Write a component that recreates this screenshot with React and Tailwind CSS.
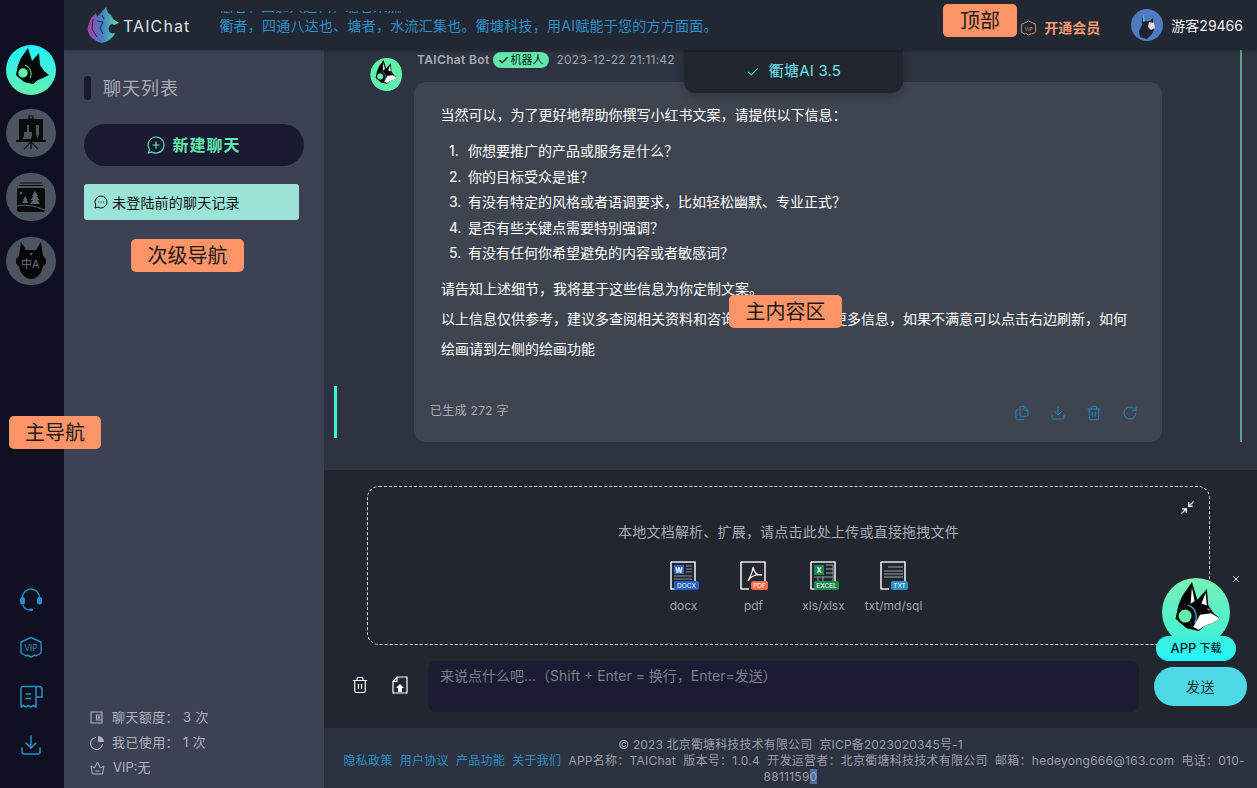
import { Check, Download, Files, Minimize2, RotateCw, Trash2, X } from 'lucide-react'

const FONT = "font-['Inter','Noto_Sans_CJK_SC',sans-serif]"

const LIST_ITEMS = [
  '你想要推广的产品或服务是什么？',
  '你的目标受众是谁？',
  '有没有特定的风格或者语调要求，比如轻松幽默、专业正式？',
  '是否有些关键点需要特别强调？',
  '有没有任何你希望避免的内容或者敏感词？',
]

// fox head in profile, shared by the rail, the chat avatar and the download badge
function FoxHead({ white = false, ring = '#63f0ad' }) {
  return (
    <g>
      <path d="M15 13 L22 3 L26 16 L33 8 L34 20 L38 26 L43 30 L37 33 L32 35 L27 39 L18 37 L10 30 L12 20 Z" fill="#050505" />
      {white && <path d="M23 36 L28 27 L36 26 L43 30 L37 33 L32 35 L27 38 Z" fill="#fff" />}
      {white && <path d="M22 7 L24 17 L21 19 Z M32 11 L33 20 L29 19 Z" fill="#fff" />}
      {white && <path d="M33 22l3 1-2 1z" fill="#d9653f" />}
      <circle cx="17" cy="28" r="5.500" fill={ring} stroke="#050505" strokeWidth="1.500" />
      <path d="M19 20 A9 9 0 0 1 24 33" fill="none" stroke={white ? '#3fa9d8' : ring} strokeWidth="1" />
    </g>
  )
}

function FoxCircle({ id, from, to, size, white }) {
  return (
    <svg width={size} height={size} viewBox="0 0 50 50">
      <defs>
        <linearGradient id={id} x1="0" y1="0" x2="0" y2="1">
          <stop offset="0" stopColor={from} />
          <stop offset="1" stopColor={to} />
        </linearGradient>
      </defs>
      <circle cx="25" cy="25" r="25" fill={`url(#${id})`} />
      <FoxHead white={white} />
    </svg>
  )
}

function EaselIcon() {
  return (
    <svg width="30" height="36" viewBox="0 0 30 36">
      <rect x="3" y="4" width="24" height="22" fill="#0b0b0b" />
      <rect x="0" y="25" width="30" height="2" fill="#0b0b0b" />
      <path d="M13 1h4v3h-4zM15 27v7M15 27l-7 7M15 27l7 7" stroke="#0b0b0b" strokeWidth="1.200" fill="none" />
      <path d="M8 17h8v3l-1 4H7l1-4zM11 10h2v7h-2z" fill="#4a5560" />
      <path d="M20 10h3v10l-1.500 3-1.500-3z" fill="#4a5560" />
    </svg>
  )
}

function PictureIcon() {
  return (
    <svg width="30" height="30" viewBox="0 0 30 30">
      <path d="M4 1h22M3 3.500h24" stroke="#0b0b0b" strokeWidth="1" />
      <rect x="1" y="6" width="28" height="24" rx="2" fill="#0b0b0b" />
      <circle cx="5" cy="11" r="1.200" fill="#5a6570" />
      <path d="M19 9l3 5h-1.500l3 4H21l3 4H14l3-4h-2.500l3-4H16z" fill="#5a6570" />
      <path d="M9 14l2.500 4h-1l2 3H6l2-3H7z" fill="#5a6570" />
      <path d="M1 24c9-2 18 0 28 4" stroke="#5a6570" strokeWidth="1" fill="none" />
    </svg>
  )
}

function TranslateFox() {
  return (
    <div className="relative w-[30px] h-[38px]">
      <svg width="30" height="38" viewBox="0 0 30 38">
        <path d="M5 0l5 8h10l5-8 2 14c2 2 3 2 3 5s-1 4-3 5c-1 7-6 13-12 13S4 31 3 24c-2-1-3-2-3-5s1-3 3-5z" fill="#050505" />
        <path d="M13 11h4l-2 3z" fill="#4a5560" />
      </svg>
      <span className="absolute left-[5px] top-[15px] text-[11px] leading-[14px] text-[#66707a]">中A</span>
    </div>
  )
}

function VipHex({ size = 24, color = '#2a8fc7', text = 8.500 }) {
  return (
    <svg width={size} height={size} viewBox="0 0 24 24">
      <path d="M12 1.500l10 4.500v11l-5 3-1-1-4 2-4-2-1 1-5-3V6z" fill="none" stroke={color} strokeWidth="1.400" strokeLinejoin="round" />
      <text x="12" y="15" textAnchor="middle" fontSize={text} fill={color} fontFamily="Inter, sans-serif">VIP</text>
    </svg>
  )
}

function FileIcon({ badge, badgeColor, children }) {
  const short = badge === 'TXT' || badge === 'PDF'
  return (
    <svg width="30" height="34" viewBox="0 0 30 34">
      <path d="M2 2h24v25M2 2v27h8" fill="none" stroke="#e8e9ec" strokeWidth="1.600" strokeLinejoin="round" />
      {children}
      <rect x={short ? 12 : 5} y="21" width={short ? 17 : 25} height="9" rx="2" fill={badgeColor} />
      <text x={short ? 20.500 : 17.500} y="28" textAnchor="middle" fontSize="6.500" fill="#fff" fontFamily="Inter, sans-serif">{badge}</text>
    </svg>
  )
}

const FILES = [
  {
    name: 'docx', badge: 'DOCX', color: '#2461c4',
    art: (
      <g>
        <rect x="5" y="5" width="10" height="9" fill="#2a66c9" />
        <text x="10" y="12.500" textAnchor="middle" fontSize="7" fontWeight="700" fill="#fff" fontFamily="Inter, sans-serif">W</text>
        <path d="M17 6h6M17 9h6M17 12h6M5 16h18M5 19h18" stroke="#8a8f98" strokeWidth="1" />
      </g>
    ),
  },
  {
    name: 'pdf', badge: 'PDF', color: '#f4694a',
    art: <path d="M14 7c1 5 3 9 9 8-5-1-12 1-14 6 2-4 5-9 5-14z" fill="none" stroke="#e8e9ec" strokeWidth="1.300" />,
  },
  {
    name: 'xls/xlsx', badge: 'EXCEL', color: '#1d8a4d',
    art: (
      <g>
        <rect x="5" y="5" width="10" height="10" fill="#1d8a4d" />
        <text x="10" y="13" textAnchor="middle" fontSize="7" fontWeight="700" fill="#fff" fontFamily="Inter, sans-serif">X</text>
        <path d="M17 5h7v16M17 9h7M17 13h7M17 17h7M5 17h12M9 17v4M14 17v4" stroke="#9aa0a8" strokeWidth="1" fill="none" />
      </g>
    ),
  },
  {
    name: 'txt/md/sql', badge: 'TXT', color: '#2a8fc7',
    art: <path d="M9 7h15M5 11h19M5 14h19M5 17h19" stroke="#9aa0a8" strokeWidth="1" />,
  },
]

function Rail() {
  return (
    <aside className="w-[64px] shrink-0 flex flex-col items-center bg-[#0f1122] pt-[45px] pb-[31px] pr-[2px]">
      <FoxCircle id="railFox" from="#1ef4ff" to="#63f0ad" size={50} />
      <div className="mt-[14px] w-[50px] h-[48px] rounded-full bg-[#4b545f] flex items-center justify-center"><EaselIcon /></div>
      <div className="mt-[16px] w-[50px] h-[48px] rounded-full bg-[#4b545f] flex items-center justify-center"><PictureIcon /></div>
      <div className="mt-[16px] w-[50px] h-[48px] rounded-full bg-[#4b545f] flex items-center justify-center"><TranslateFox /></div>

      <div className="mt-auto flex flex-col items-center gap-[24.500px] text-[#2a8fc7]">
        <svg width="24" height="24" viewBox="0 0 24 24" fill="none">
          <path d="M3.500 11V9.500a8.500 8.500 0 0 1 17 0V11" stroke="currentColor" strokeWidth="1.500" />
          <rect x="1" y="9" width="5" height="7.500" rx="2.500" fill="currentColor" />
          <rect x="18" y="9" width="5" height="7.500" rx="2.500" fill="currentColor" />
          <path d="M4 17c1 3 4 5 7 5" stroke="currentColor" strokeWidth="1.300" />
          <rect x="10" y="20.500" width="4" height="2.500" rx="1.200" fill="currentColor" />
        </svg>
        <VipHex />
        <svg width="24" height="24" viewBox="0 0 24 24" fill="none" stroke="currentColor" strokeWidth="1.500">
          <path d="M17 1.500H4a2 2 0 0 0-2 2V22l2.500-1.500L7 22l2.500-1.500L12 22l2.500-1.500L17 22V1.500z" strokeLinejoin="round" />
          <path d="M17 1.500h3a3 3 0 0 1 3 3V12h-6M6.500 9H12M6.500 13.500H12" />
        </svg>
        <Download size={24} strokeWidth={1.500} />
      </div>
    </aside>
  )
}

function SecondNav() {
  return (
    <nav className="w-[260px] shrink-0 bg-[#3d4154] flex flex-col pl-[20px] pr-[20px] pt-[26px] pb-[11px]">
      <div className="flex items-center gap-[12px] h-[24px]">
        <span className="w-[7px] h-[24px] rounded-[3px] bg-[#1a1b33]" />
        <span className="text-[18px] tracking-[1px] text-[#a8abb5]">聊天列表</span>
      </div>
      <button className="mt-[24px] h-[42px] rounded-full bg-[#1a1b33] flex items-center justify-center gap-[7px] text-[#62e6ab]">
        <svg width="18" height="18" viewBox="0 0 18 18" fill="none" stroke="currentColor" strokeWidth="1.200">
          <path d="M9 1a8 8 0 1 1-4 14.900L1.500 17 2.600 13.500A8 8 0 0 1 9 1zM9 5.500v7M5.500 9h7" strokeLinejoin="round" />
        </svg>
        <span className="text-[16px] font-semibold tracking-[1px]">新建聊天</span>
      </button>
      <div className="mt-[18px] mr-[5px] h-[36px] rounded-[3px] bg-[#9ae3d6] flex items-center gap-[4px] pl-[10px] text-[14px] tracking-[.2px] text-[#111]">
        <svg width="14" height="14" viewBox="0 0 14 14" fill="none" stroke="#111" strokeWidth="1">
          <path d="M7 1a6 6 0 1 1-3 11.200L1 13l.800-3A6 6 0 0 1 7 1z" />
          <path d="M4.500 7h.800M6.700 7h.800M8.900 7h.800" />
        </svg>
        未登陆前的聊天记录
      </div>

      <div className="mt-auto flex flex-col gap-[6px] text-[13px] leading-[19px] text-[#b0b2bb] pl-[6px]">
        <div className="flex items-center gap-[9px]">
          <svg width="13" height="13" viewBox="0 0 13 13" fill="none" stroke="currentColor" strokeWidth="1.100">
            <path d="M12 1H1v11h11zM12 4H6.500v5H12" /><circle cx="9" cy="6.500" r=".8" />
          </svg>
          <span className="tracking-[.4px]">聊天额度： 3 次</span>
        </div>
        <div className="flex items-center gap-[8px]">
          <svg width="14" height="14" viewBox="0 0 14 14" fill="none">
            <path d="M6 1.500a6 6 0 1 0 6.500 6.500" stroke="currentColor" strokeWidth="1.100" />
            <path d="M8 0a6 6 0 0 1 6 6H8z" fill="currentColor" />
          </svg>
          <span className="tracking-[.4px]">我已使用： 1 次</span>
        </div>
        <div className="flex items-center gap-[8px]">
          <svg width="15" height="14" viewBox="0 0 15 14" fill="none" stroke="currentColor" strokeWidth="1">
            <path d="M1 5l3.500 2L7.500 1l3 6L14 5l-1.500 8h-10zM5.500 10h4" strokeLinejoin="round" />
          </svg>
          <span>VIP:无</span>
        </div>
      </div>
    </nav>
  )
}

function Message() {
  return (
    <div className="h-[392px] mr-[15px] border-r-2 border-[#57a68a] pl-[45px] pr-[78px] pt-[7px]">
      <div className="flex gap-[16px]">
        <div className="w-[33px] h-[35px] shrink-0 rounded-full overflow-hidden">
          <svg width="33" height="35" viewBox="0 0 50 50">
            <circle cx="27" cy="25" r="25" fill="#63f0ad" />
            <FoxHead white />
          </svg>
        </div>
        <div className="-ml-[1px] flex items-center gap-[3px] h-[10px] mt-[-2px] text-[12px]">
          <span className="font-semibold tracking-[.35px] text-[#a8abb5]">TAIChat Bot</span>
          <span className="h-[16px] px-[5px] rounded-full bg-[#62e6ab] flex items-center gap-[2px] text-[11px] text-[#14201c]">
            <Check size={11} strokeWidth={3} />机器人
          </span>
          <span className="ml-[5px] tracking-[.2px] text-[#a0a3ad]">2023-12-22 21:11:42</span>
        </div>
      </div>
      <div className="-mt-[10px] ml-[45px] h-[360px] rounded-[12px] bg-[#3f4451] relative text-[14px] text-white">
        <div className="pl-[27px] pr-[30px] pt-[22px]">
          <p className="-ml-[0.5px] leading-[22px]">当然可以，为了更好地帮助你撰写小红书文案，请提供以下信息：</p>
          <ol className="mt-[12px] flex flex-col">
            {LIST_ITEMS.map((t, i) => (
              <li key={t} className="h-[25.500px] leading-[25.500px] pl-[8px] flex">
                <span className="w-[19px] shrink-0">{i + 1}.</span><span>{t}</span>
              </li>
            ))}
          </ol>
          <p className="mt-[12px] leading-[22px]">请告知上述细节，我将基于这些信息为你定制文案。</p>
          <p className="mt-[4px] leading-[30px]">以上信息仅供参考，建议多查阅相关资料和咨询专业人士以获取更多信息，如果不满意可以点击右边刷新，如何绘画请到左侧的绘画功能</p>
        </div>
        <div className="absolute left-[16px] right-[24px] bottom-[20px] flex items-center justify-between">
          <span className="mb-[3px] text-[12px] leading-[16px] text-[#a8abb5] tracking-[.3px]">已生成 272 字</span>
          <div className="flex items-center gap-[20px] text-[#1f86bf]">
            <Files size={16} strokeWidth={1.500} />
            <Download size={16} strokeWidth={1.500} />
            <Trash2 size={16} strokeWidth={1.500} />
            <RotateCw size={16} strokeWidth={1.500} />
          </div>
        </div>
      </div>
    </div>
  )
}

function Composer() {
  return (
    <section className="h-[258px] bg-[#21262f] pl-[43px] pt-[16px] pr-[10px]">
      <div className="relative mr-[37px] h-[159px] rounded-[12px] border border-dashed border-[#d7d9dd] flex flex-col items-center pt-[35px]">
        <Minimize2 size={15} className="absolute right-[14px] top-[13px] text-white" />
        <p className="text-[14px] tracking-[.2px] leading-[20px] text-[#a8abb5]">本地文档解析、扩展，请点击此处上传或直接拖拽文件</p>
        <div className="mt-[18px] flex gap-[34px]">
          {FILES.map(f => (
            <div key={f.name} className="w-[36px] flex flex-col items-center">
              <FileIcon badge={f.badge} badgeColor={f.color}>{f.art}</FileIcon>
              <span className="mt-[4px] whitespace-nowrap text-[12px] leading-[16px] text-[#a0a3ad]">{f.name}</span>
            </div>
          ))}
        </div>
      </div>
      <div className="mt-[16px] flex items-start">
        <div className="w-[61px] -ml-[16px] flex items-center gap-[22px] pt-[15px] text-white shrink-0">
          <Trash2 size={18} strokeWidth={1.500} />
          <svg width="18" height="18" viewBox="0 0 18 18" fill="none" stroke="#fff" strokeWidth="1.200">
            <path d="M6 1h10v16H2V5.500zM6 1v4.500H2" />
            <path d="M9 8l4 4h-2v4H7v-4H5z" fill="#fff" stroke="none" />
          </svg>
        </div>
        <div className="ml-[16px] w-[711px] shrink-0 h-[51px] rounded-[8px] bg-[#1b1c33] pl-[12px] pt-[5px] text-[14px] leading-[20px] text-[#7d7f88]">
          来说点什么吧...（Shift + Enter = 换行，Enter=发送）
        </div>
        <button className="ml-[15px] mt-[6px] w-[93px] h-[39px] shrink-0 rounded-full bg-[#4fd8e6] text-[14px] tracking-[.5px] text-[#26343a]">发送</button>
      </div>
    </section>
  )
}

function Footer() {
  return (
    <footer className="flex-1 bg-[#2c3240] px-[10px] pt-[9px] text-center text-[12px] tracking-[.25px] leading-[16px] text-[#9b9ea8]">
      <div className="tracking-[.15px]">© 2023 北京衢塘科技技术有限公司&nbsp;&nbsp;京ICP备2023020345号-1</div>
      <div>
        &nbsp;&nbsp;<span className="text-[#2a8fc7]">隐私政策&nbsp;&nbsp;用户协议&nbsp;&nbsp;产品功能&nbsp;&nbsp;关于我们</span>
        &nbsp;&nbsp;APP名称：TAIChat&nbsp;&nbsp;版本号：1.0.4&nbsp;&nbsp;开发运营者：北京衢塘科技技术有限公司&nbsp;&nbsp;邮箱：hedeyong666@163.com&nbsp;&nbsp;电话：010-8811159<span className="bg-[#4a72a8]">0</span>
      </div>
    </footer>
  )
}

function Tag({ className, children }) {
  return (
    <div className={`absolute z-20 h-[33px] rounded-[5px] bg-[#ff9468] flex items-center justify-center text-[20px] text-[#1a1a1a] ${className}`}>
      {children}
    </div>
  )
}

export default function App() {
  return (
    <div className={`${FONT} relative w-full h-screen flex overflow-hidden bg-[#2d3340]`}>
      <Rail />
      <div className="flex-1 min-w-0 flex flex-col">
        <header className="h-[50px] shrink-0 bg-[#212733] flex items-center shadow-[0_1px_3px_rgba(0,0,0,.3)] z-10">
          <svg className="ml-[23px]" width="32" height="36" viewBox="0 0 32 36">
            <defs>
              <linearGradient id="logoWolf" x1="0" y1="0" x2="1" y2="0">
                <stop offset="0" stopColor="#b13fa8" />
                <stop offset=".45" stopColor="#3f7fc4" />
                <stop offset="1" stopColor="#63e0a0" />
              </linearGradient>
            </defs>
            <path d="M19 0l2 6 3 2 2 4 6 4-5 2-2-1c-3 1-4 4-3 7 1 2 3 3 6 2-2 5-7 9-13 10C8 34 2 30 1 24c-1-5 2-9 3-13l5-5 1 4z" fill="url(#logoWolf)" />
            <path d="M10 14l6 1-3 6 3 6M6 12l-1 10 5 8M15 8l2 4" stroke="#212733" strokeWidth="1" fill="none" />
          </svg>
          <span className="ml-[4px] mt-[1px] text-[16px] tracking-[1.100px] text-[#dfe1e5]">TAIChat</span>
          <div className="ml-[29px] mt-[-6px] h-[34px] w-[560px] overflow-hidden flex flex-col text-[14px] leading-[22px] text-[#2a8fc7] whitespace-nowrap">
            {/* previous marquee line, almost scrolled out */}
            <div className="h-[2px] shrink-0 mt-[6px] overflow-hidden flex flex-col justify-end leading-[13px]"><span className="block shrink-0">衢者，四通八达也，塘者水流</span></div>
            <div className="mt-[2px] tracking-[.25px]">衢者，四通八达也、塘者，水流汇集也。衢塘科技，用AI赋能于您的方方面面。</div>
          </div>
          <div className="ml-auto flex items-center">
            <div className="mt-[6px]"><VipHex size={17} color="#d98a66" text={7} /></div>
            <span className="ml-[7px] mt-[5px] text-[14px] font-semibold text-[#f29a6e]">开通会员</span>
            <svg className="ml-[31px]" width="32" height="32" viewBox="0 0 32 32">
              <circle cx="16" cy="16" r="16" fill="#4f7cc0" />
              <path d="M11 8l3 4h5l3-3 0 7c2 4 0 8-2 10l-4 4-7-2-1-6 3-6z" fill="#1d2233" />
              <path d="M18 13l5 1 1 5-4 2-3-3z" fill="#e7dcd8" />
              <path d="M12 4l2 8-2 1z" fill="#4fc3e8" />
            </svg>
            <span className="ml-[8px] mr-[14px] text-[14px] text-[#eef0f3]">游客29466</span>
          </div>
        </header>
        <div className="flex-1 min-h-0 flex">
          <SecondNav />
          <main className="flex-1 min-w-0 flex flex-col relative">
            <div className="h-[420px] shrink-0">
              <Message />
            </div>
            <Composer />
            <Footer />
            {/* model picker dropped from the header */}
            <div className="absolute left-[360px] top-0 w-[219px] h-[43px] rounded-b-[12px] bg-[#21262f] shadow-[0_2px_8px_rgba(0,0,0,.25)] flex items-center justify-center gap-[9px] text-[15px]">
              <Check size={14} strokeWidth={1.800} className="text-[#35d8e6]" />
              <span className="tracking-[.2px] text-[#6fe3ee]">衢塘AI 3.5</span>
            </div>
            <div className="absolute left-[10px] top-[336px] w-[3px] h-[52px] bg-[#3ef5cf]" />
          </main>
        </div>
      </div>

      {/* app download float */}
      <div className="absolute z-10 left-[1156px] top-[578px] w-[80px] flex flex-col items-center">
        <FoxCircle id="appFox" from="#7bf0b4" to="#3df0d8" size={68} white />
        <div className="-mt-[10px] w-[80px] h-[25px] rounded-full bg-gradient-to-b from-[#3ff0d8] to-[#1ef4ff] flex items-center justify-center gap-[3px] text-[13px] font-medium text-[#0b1a1e]">
          APP <span className="text-[11px]">下载</span>
        </div>
      </div>
      <X size={10} strokeWidth={2} className="absolute z-10 left-[1231px] top-[574px] text-white" />

      <Tag className="left-[943px] top-[4px] w-[74px]">顶部</Tag>
      <Tag className="left-[131px] top-[239px] w-[113px]">次级导航</Tag>
      <Tag className="left-[729px] top-[295px] w-[113px]">主内容区</Tag>
      <Tag className="left-[9px] top-[416px] w-[92px]">主导航</Tag>
    </div>
  )
}
